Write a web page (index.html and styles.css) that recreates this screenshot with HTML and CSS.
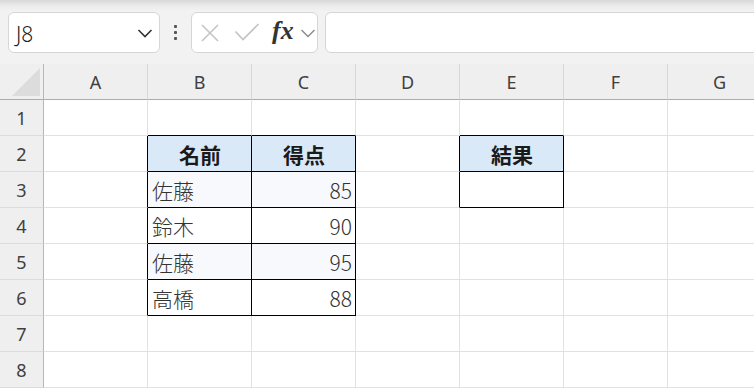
FILE: index.html
```
<!DOCTYPE html>
<html lang="ja">
<head>
  <meta charset="UTF-8">
  <title>Sheet1</title>
  <link rel="stylesheet" href="styles.css">
</head>
<body>
  <div class="toolbar">
    <div class="name-box">
      <span>J8</span>
      <svg class="chev" width="16" height="10" viewBox="0 0 16 10"><path d="M1.5 2 L8 8.5 L14.5 2" fill="none" stroke="#333" stroke-width="1.6"/></svg>
    </div>
    <div class="more"><i></i><i></i><i></i></div>
    <div class="fx-box">
      <svg width="20" height="20" viewBox="0 0 20 20"><path d="M2 2 L18 18 M18 2 L2 18" stroke="#c4c4c4" stroke-width="1.6"/></svg>
      <svg width="26" height="20" viewBox="0 0 26 20"><path d="M1.5 8.5 L9 16.5 L24.5 1" fill="none" stroke="#c4c4c4" stroke-width="1.6"/></svg>
      <span class="fx">fx</span>
      <svg width="16" height="10" viewBox="0 0 16 10"><path d="M1.5 2 L8 8.5 L14.5 2" fill="none" stroke="#8a8a8a" stroke-width="1.4"/></svg>
    </div>
    <div class="formula-input"></div>
  </div>

  <div class="sheet">
    <div class="corner"><span></span></div>
    <div class="col-head">A</div>
    <div class="col-head">B</div>
    <div class="col-head">C</div>
    <div class="col-head">D</div>
    <div class="col-head">E</div>
    <div class="col-head">F</div>
    <div class="col-head">G</div>

    <div class="row-head">1</div>
    <div class="cell"></div>
    <div class="cell edge-t"></div>
    <div class="cell edge-t"></div>
    <div class="cell"></div>
    <div class="cell edge-t"></div>
    <div class="cell"></div>
    <div class="cell"></div>

    <div class="row-head">2</div>
    <div class="cell edge-l"></div>
    <div class="cell th">名前</div>
    <div class="cell th">得点</div>
    <div class="cell edge-l"></div>
    <div class="cell th">結果</div>
    <div class="cell"></div>
    <div class="cell"></div>

    <div class="row-head">3</div>
    <div class="cell edge-l"></div>
    <div class="cell td alt">佐藤</div>
    <div class="cell td alt num">85</div>
    <div class="cell edge-l"></div>
    <div class="cell td"></div>
    <div class="cell"></div>
    <div class="cell"></div>

    <div class="row-head">4</div>
    <div class="cell edge-l"></div>
    <div class="cell td">鈴木</div>
    <div class="cell td num">90</div>
    <div class="cell"></div>
    <div class="cell"></div>
    <div class="cell"></div>
    <div class="cell"></div>

    <div class="row-head">5</div>
    <div class="cell edge-l"></div>
    <div class="cell td alt">佐藤</div>
    <div class="cell td alt num">95</div>
    <div class="cell"></div>
    <div class="cell"></div>
    <div class="cell"></div>
    <div class="cell"></div>

    <div class="row-head">6</div>
    <div class="cell edge-l"></div>
    <div class="cell td">高橋</div>
    <div class="cell td num">88</div>
    <div class="cell"></div>
    <div class="cell"></div>
    <div class="cell"></div>
    <div class="cell"></div>

    <div class="row-head">7</div>
    <div class="cell"></div>
    <div class="cell"></div>
    <div class="cell"></div>
    <div class="cell"></div>
    <div class="cell"></div>
    <div class="cell"></div>
    <div class="cell"></div>

    <div class="row-head">8</div>
    <div class="cell"></div>
    <div class="cell"></div>
    <div class="cell"></div>
    <div class="cell"></div>
    <div class="cell"></div>
    <div class="cell"></div>
    <div class="cell"></div>
  </div>
</body>
</html>
```

FILE: styles.css
```
* {
  box-sizing: border-box;
}
body {
  margin: 0;
  overflow: hidden;
  background: #fff;
  font-family: "Noto Sans", "Noto Sans CJK JP", sans-serif;
  color: #222;
}

/* formula bar */
.toolbar {
  height: 64px;
  padding: 12px 0 0 8px;
  display: flex;
  align-items: flex-start;
  background: linear-gradient(to bottom, #d8d8d8 0, #ececec 6px, #f2f2f2 11px, #f2f2f2 100%);
}
.name-box {
  width: 152px;
  height: 41px;
  background: #fff;
  border: 1px solid #d6d6d6;
  border-radius: 6px;
  display: flex;
  align-items: center;
  padding: 2px 6px 0 7px;
}
.name-box span {
  flex: 1;
  font-size: 21px;
  font-weight: 300;
  color: #222;
}
.name-box .chev {
  margin-top: -2px;
}
.more {
  width: 31px;
  height: 41px;
  display: flex;
  flex-direction: column;
  align-items: center;
  justify-content: center;
  gap: 3px;
}
.more i {
  width: 3px;
  height: 3px;
  background: #555;
  border-radius: 1px;
}
.fx-box {
  width: 127px;
  height: 41px;
  background: #fff;
  border: 1px solid #d6d6d6;
  border-radius: 6px;
  display: flex;
  align-items: center;
  padding: 0 0 0 8px;
}
.fx-box svg:first-child {
  margin-right: 14px;
}
.fx-box svg:nth-child(2) {
  margin-right: 12px;
}
.fx {
  font-family: "Liberation Serif", serif;
  font-style: italic;
  font-weight: bold;
  font-size: 26px;
  color: #333;
  margin-right: 6px;
  margin-top: -3px;
}
.formula-input {
  flex: 1;
  height: 41px;
  margin-left: 7px;
  margin-right: -10px;
  background: #fff;
  border: 1px solid #d6d6d6;
  border-radius: 6px;
}

/* grid */
.sheet {
  display: grid;
  grid-template-columns: 44px repeat(7, 104px);
  grid-template-rows: 36px;
  grid-auto-rows: 36px;
  width: 772px;
}
.corner {
  background: #efefef;
  border-right: 1px solid #b8b8b8;
  border-bottom: 1px solid #adadad;
  position: relative;
}
.corner span {
  position: absolute;
  left: 12px;
  top: 4px;
  width: 28px;
  height: 28px;
  background: #dcdcdc;
  clip-path: polygon(100% 0, 100% 100%, 0 100%);
}
.col-head {
  background: #efefef;
  border-right: 1px solid #d8d8d8;
  border-bottom: 1px solid #adadad;
  display: flex;
  align-items: center;
  justify-content: center;
  font-size: 18px;
  color: #404040;
  padding-top: 1px;
}
.row-head {
  background: #efefef;
  border-right: 1px solid #b8b8b8;
  border-bottom: 1px solid #dcdcdc;
  display: flex;
  align-items: center;
  justify-content: center;
  font-size: 18px;
  color: #404040;
}
.cell {
  border-right: 1px solid #e1e1e1;
  border-bottom: 1px solid #e1e1e1;
  display: flex;
  align-items: center;
  padding: 0 3px 0 4px;
  font-family: "Noto Sans CJK JP", sans-serif;
  font-size: 21px;
  font-weight: 300;
  color: #333;
}
.cell.edge-l {
  border-right-color: #000;
}
.cell.edge-t {
  border-bottom-color: #000;
}
.cell.th {
  background: #dae9f8;
  border-right-color: #000;
  border-bottom-color: #000;
  justify-content: center;
  font-weight: bold;
  color: #1a1a1a;
}
.cell.td {
  border-right-color: #000;
  border-bottom-color: #000;
}
.cell.alt {
  background: #f7f9fc;
}
.cell.num {
  justify-content: flex-end;
}
```
